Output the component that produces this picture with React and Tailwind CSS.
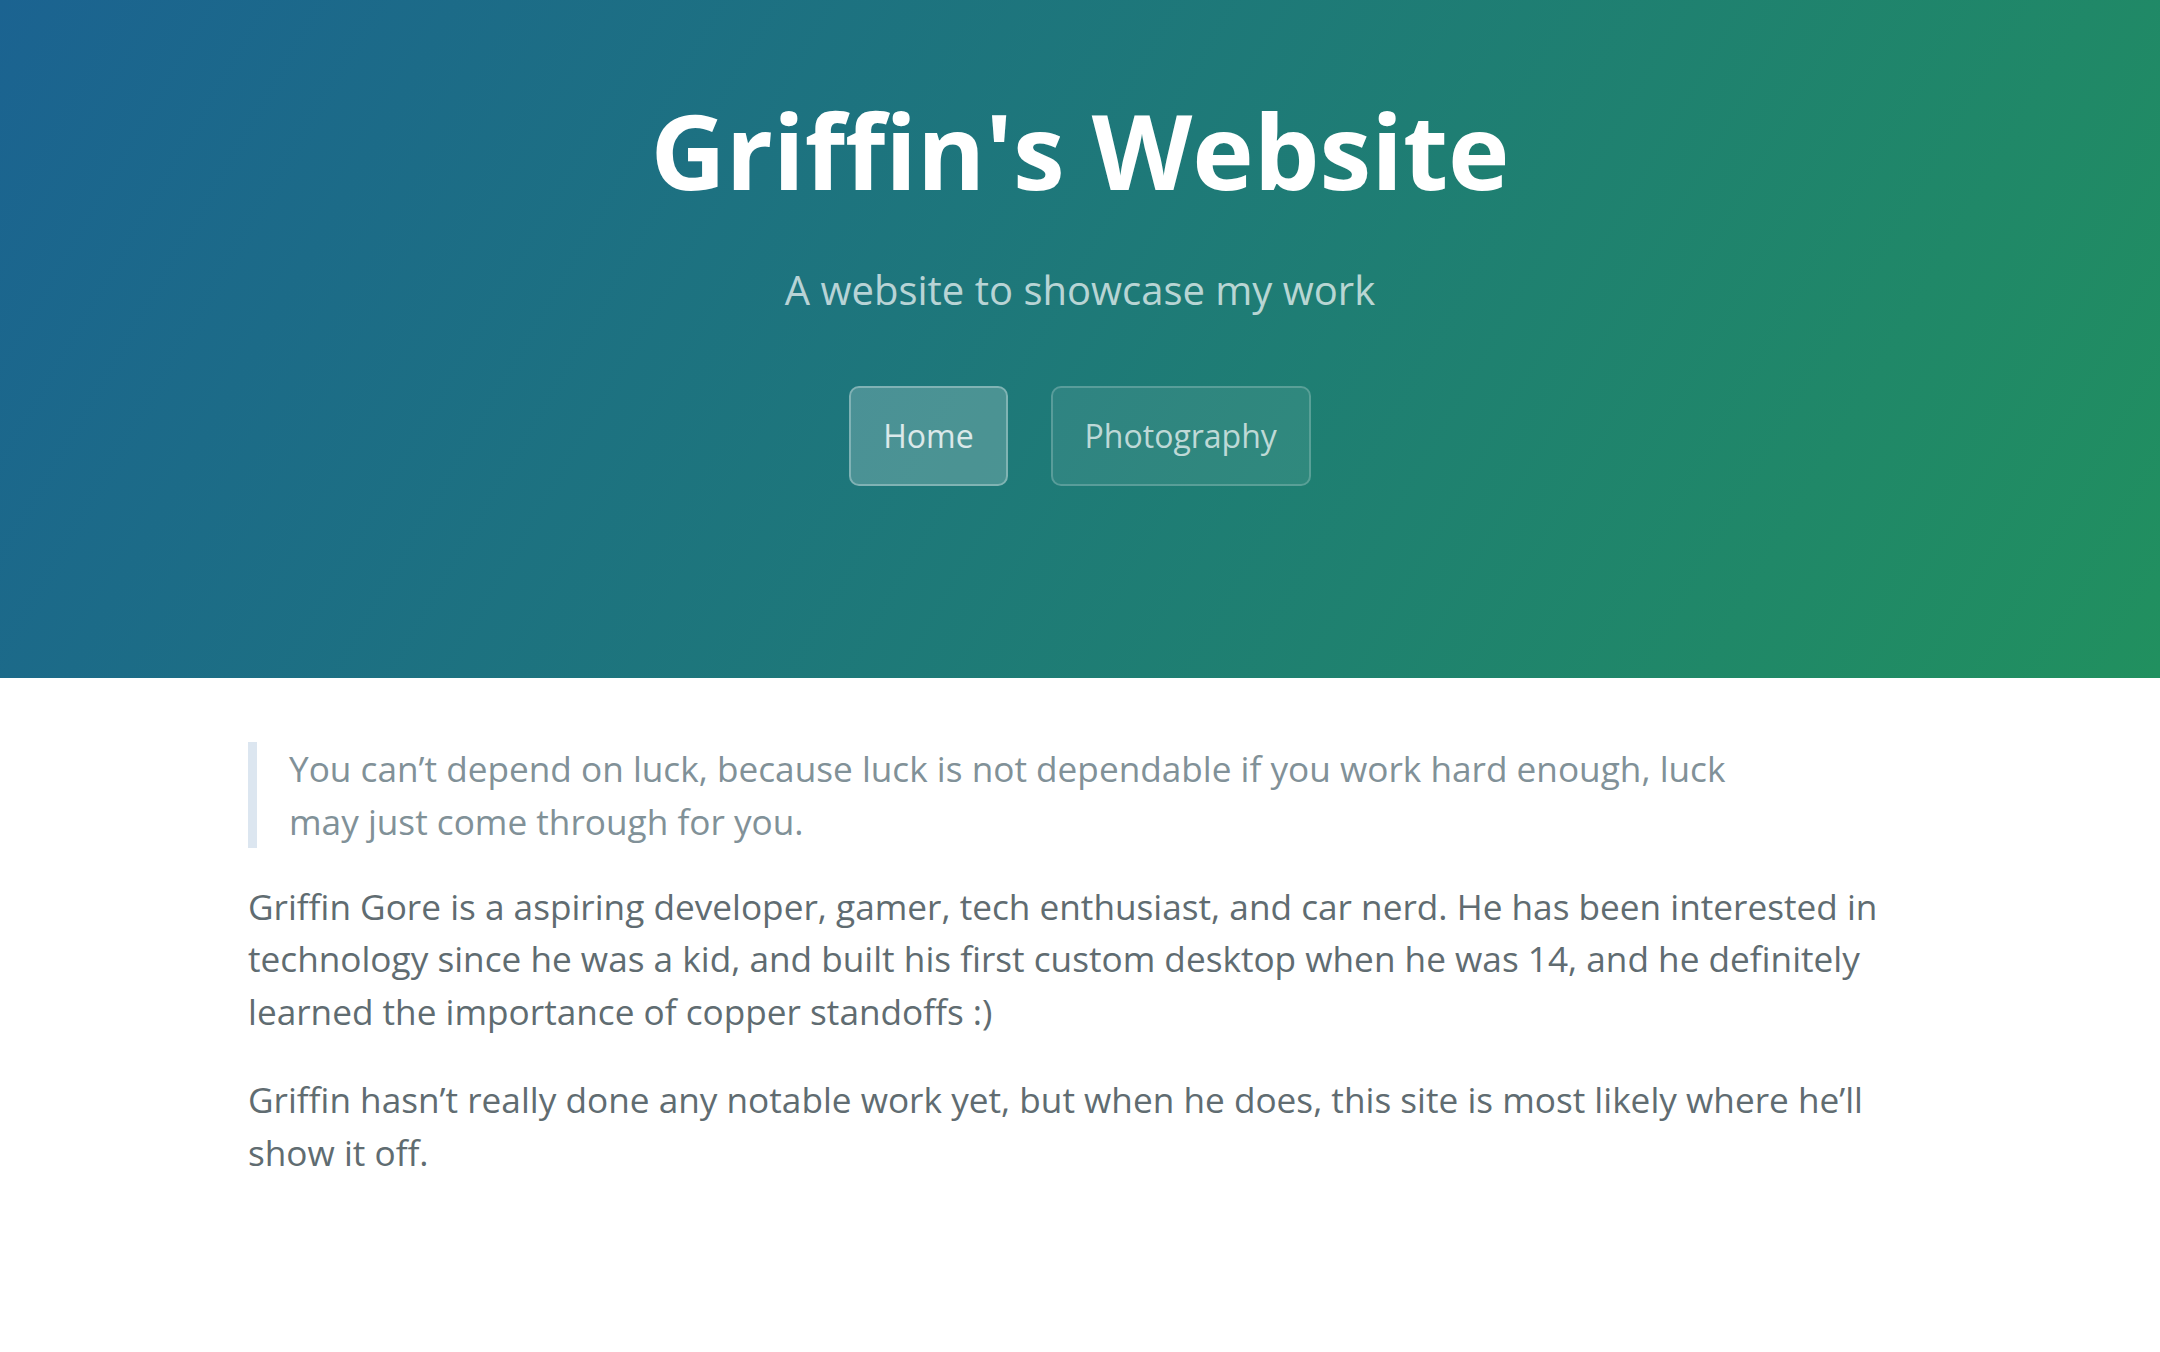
import React from 'react';

const navLinks = [
   { label: 'Home', active: true },
   { label: 'Photography', active: false },
];

const App = () => {
   return (
       <div className="min-h-[1352px] bg-white font-['Open_Sans',sans-serif]">
          <header className="bg-[linear-gradient(120deg,#1b6391,#21905f)] text-center pt-[88px] pb-[192px]">
             <h1 className="text-[104px] leading-[124px] font-bold text-white">Griffin's Website</h1>
             <h2 className="mt-[48px] text-[40px] leading-[60px] font-normal text-white/70">
                A website to showcase my work
             </h2>
             <nav className="mt-[66px] flex justify-center gap-[43px]">
                {navLinks.map(link => (
                    <a
                        key={link.label}
                        href="#"
                        className={
                           link.active
                               ? 'px-8 py-6 border-2 rounded-[10px] text-[32px] leading-[48px] bg-white/20 border-white/30 text-white/80'
                               : 'px-8 py-6 border-2 rounded-[10px] text-[32px] leading-[48px] bg-white/[0.08] border-white/20 text-white/70'
                        }
                    >
                       {link.label}
                    </a>
                ))}
             </nav>
          </header>

          <main className="max-w-[2048px] mx-auto px-[192px] pt-[64px] pb-[64px] text-[35.2px] leading-[1.5] text-[#606c71]">
             <blockquote className="mb-[32px] border-l-[9.6px] border-[#dce6f0] px-[32px] text-[#819198]">
                You can’t depend on luck, because luck is not dependable if you work hard enough, luck
                <br />
                may just come through for you.
             </blockquote>
             <p className="mb-[35px]">
                Griffin Gore is a aspiring developer, gamer, tech enthusiast, and car nerd. He has been interested in
                technology since he was a kid, and built his first custom desktop when he was 14, and he definitely
                learned the importance of copper standoffs :)
             </p>
             <p className="mb-[35px]">
                Griffin hasn’t really done any notable work yet, but when he does, this site is most likely where he’ll
                show it off.
             </p>
          </main>
       </div>
   );
};

export default App;
